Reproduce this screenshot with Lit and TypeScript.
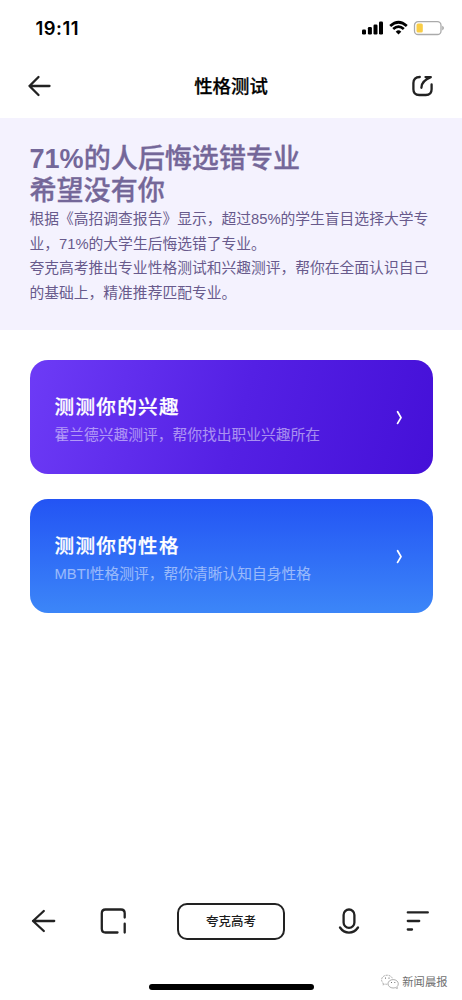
import { LitElement, html, css, svg } from "lit";
import { customElement, property } from "lit/decorators.js";

@customElement("test-card")
class TestCard extends LitElement {
  @property() heading = "";
  @property() note = "";

  static styles = css`
    :host {
      box-sizing: border-box;
      display: flex;
      align-items: center;
      justify-content: space-between;
      height: 114px;
      padding: 2px 28px 0 25px;
      border-radius: 18px;
      color: #fff;
    }
    .text {
      padding-top: 5px;
    }
    .title {
      margin: 0;
      font-size: 19.6px;
      line-height: 28px;
      letter-spacing: 1.3px;
      font-weight: 500;
      -webkit-text-stroke: 0.25px currentColor;
    }
    .note {
      margin: 0;
      font-size: 14.75px;
      line-height: 28px;
      opacity: 0.5;
      white-space: nowrap;
    }
    .chevron {
      display: block;
    }
  `;

  render() {
    return html`
      <div class="text">
        <h2 class="title">${this.heading}</h2>
        <p class="note">${this.note}</p>
      </div>
      <svg class="chevron" width="10" height="16" viewBox="0 0 10 16" fill="none" stroke="#fff" stroke-width="1.8" stroke-linecap="round" stroke-linejoin="round">
        <path d="M2.6 1.8L6 7.6L2.6 13.4" />
      </svg>
    `;
  }
}

const arrow = svg`<path d="M23.2 12H2M12.8 2L2 12L12.8 22" />`;

@customElement("app-root")
class AppRoot extends LitElement {
  static styles = css`
    :host {
      display: flex;
      flex-direction: column;
      box-sizing: border-box;
      width: 462px;
      height: 1000px;
      overflow: hidden;
      background: #fff;
      font-family: "Liberation Sans", "Noto Sans CJK SC", sans-serif;
      color: #1c1c1c;
    }
    svg {
      display: block;
      flex: none;
    }
    .line {
      fill: none;
      stroke: #222;
      stroke-width: 2.3;
      stroke-linecap: round;
      stroke-linejoin: round;
    }
    .status {
      display: flex;
      align-items: center;
      justify-content: space-between;
      height: 56px;
      padding: 0 17px 0 35.5px;
    }
    .clock {
      font-family: Inter, sans-serif;
      font-size: 18.4px;
      font-weight: 600;
      letter-spacing: 0.5px;
      color: #000;
    }
    .nav {
      display: grid;
      grid-template-columns: 24px 1fr 24px;
      align-items: center;
      height: 62px;
      padding: 0 27px 2px;
      box-sizing: border-box;
    }
    .nav-title {
      margin: 0;
      padding-top: 1px;
      text-align: center;
      font-size: 18.4px;
      line-height: 26px;
      font-weight: 500;
      -webkit-text-stroke: 0.25px currentColor;
      color: #000;
    }
    .hero {
      box-sizing: border-box;
      height: 212px;
      padding: 25px 29.5px 0;
      background: #f4f2fe;
    }
    .hero-title {
      margin: 0;
      font-size: 27.05px;
      line-height: 32px;
      font-weight: 500;
      -webkit-text-stroke: 0.3px currentColor;
      color: #746799;
    }
    .figure {
      font-weight: 700;
      -webkit-text-stroke: 0;
    }
    .hero-text {
      margin: 0;
      font-size: 14.77px;
      line-height: 24.6px;
      white-space: nowrap;
      color: #685a8c;
    }
    .cards {
      flex: 1;
      display: flex;
      flex-direction: column;
      gap: 25px;
      padding: 30px 29.5px 0;
    }
    .interest {
      background: linear-gradient(105deg, #6d3bf6 0%, #5420e4 52%, #4510d8 100%);
    }
    .character {
      background: linear-gradient(180deg, #2354f4, #3c86f8);
    }
    .toolbar {
      display: grid;
      grid-template-columns: 69px 77px 160.5px 67.5px auto;
      align-items: center;
      height: 38px;
      padding-left: 31px;
    }
    .search {
      box-sizing: border-box;
      width: 108px;
      height: 37px;
      border: 2px solid #222;
      border-radius: 10px;
      text-align: center;
      font-size: 12.5px;
      line-height: 34px;
      font-weight: 500;
    }
    .footer {
      display: grid;
      grid-template-columns: 1fr 165px 1fr;
      align-items: end;
      height: 60px;
      box-sizing: border-box;
      padding-bottom: 10px;
    }
    .home {
      grid-column: 2;
      height: 6px;
      border-radius: 3px;
      background: #000;
    }
    .source {
      display: flex;
      align-items: center;
      justify-content: flex-end;
      gap: 3px;
      padding-right: 14.5px;
      font-size: 11.3px;
      line-height: 16px;
      color: #707070;
    }
  `;

  render() {
    return html`
      <header class="status">
        <span class="clock">19:11</span>
        <svg width="84" height="16" viewBox="0 0 84 16">
          <rect x="1" y="9.5" width="4" height="5" rx="1.2" />
          <rect x="6.9" y="7" width="4" height="7.5" rx="1.2" />
          <rect x="12.5" y="4.5" width="4" height="10" rx="1.2" />
          <rect x="18" y="1.5" width="4" height="13" rx="1.2" />
          <g fill="none" stroke="#000" stroke-width="2.7">
            <path d="M29.2 6.1Q37.5 -1.6 45.8 6.1" />
            <path d="M32.2 9.1Q37.5 4.2 42.8 9.1" />
          </g>
          <path d="M34.7 11.7Q37.5 9 40.3 11.7L37.5 14.5Z" />
          <rect x="53.5" y="1.7" width="26.5" height="12.8" rx="3.6" fill="none" stroke="#aaa" stroke-width="1.3" />
          <rect x="55.5" y="3.6" width="6.3" height="9" rx="1.5" fill="#f9cd46" />
          <path d="M81.2 5.8Q83 6.5 83 8T81.2 10.4Z" fill="#aaa" />
        </svg>
      </header>
      <nav class="nav">
        <svg class="line" width="24" height="24" viewBox="0 0 24 24"><path d="M22.5 12H2.5M11.5 3L2.5 12L11.5 21" /></svg>
        <h1 class="nav-title">性格测试</h1>
        <svg class="line" width="24" height="24" viewBox="0 0 24 24">
          <path d="M8.8 3Q2.4 3 2.4 9V15.2Q2.4 21 8.2 21H14.8Q20.6 21 20.6 15.2V10.5" />
          <path d="M14.5 3.1H19.8Q10.2 7 10.4 13.8" />
        </svg>
      </nav>
      <section class="hero">
        <h2 class="hero-title"><span class="figure">71%</span>的人后悔选错专业<br />希望没有你</h2>
        <p class="hero-text">
          根据《高招调查报告》显示，超过85%的学生盲目选择大学专<br />业，71%的大学生后悔选错了专业。<br />夸克高考推出专业性格测试和兴趣测评，帮你在全面认识自己<br />的基础上，精准推荐匹配专业。
        </p>
      </section>
      <main class="cards">
        <test-card class="interest" heading="测测你的兴趣" note="霍兰德兴趣测评，帮你找出职业兴趣所在"></test-card>
        <test-card class="character" heading="测测你的性格" note="MBTI性格测评，帮你清晰认知自身性格"></test-card>
      </main>
      <div class="toolbar">
        <svg class="line" width="25" height="24" viewBox="0 0 25 24">${arrow}</svg>
        <svg class="line" width="27" height="26" viewBox="0 0 27 26">
          <path d="M17.5 24.5H5.5Q1.8 24.5 1.8 20.8V5.2Q1.8 1.5 5.5 1.5H21Q24.7 1.5 24.7 5.2V9.5M24.7 15.7V24.5" />
        </svg>
        <div class="search">夸克高考</div>
        <svg class="line" width="22" height="26" viewBox="0 0 22 26">
          <rect x="5.6" y="1.5" width="10.8" height="18.3" rx="5.4" />
          <path d="M2 19.5Q5.5 24.6 11 24.6T20 19.5" />
        </svg>
        <svg class="line" width="24" height="26" viewBox="0 0 24 26"><path d="M2.8 4.4H22.8M2.8 13H14.2M2.8 21.5H7" /></svg>
      </div>
      <footer class="footer">
        <div class="home"></div>
        <div class="source">
          <svg width="18" height="16" viewBox="0 0 18 16" fill="none" stroke="#999" stroke-width="0.8">
            <path d="M6.3 10.2Q5.2 10.4 4 10L1.8 11L2.2 9Q0.6 7.7 0.6 5.8C0.6 3.2 3 1.2 6.1 1.2C9 1.2 11 2.8 11.5 5" stroke-dasharray="2 0.8" />
            <path d="M16 12.7Q17.3 11.5 17.3 9.8C17.3 7.3 15 5.6 12.1 5.6S7 7.5 7 9.8S9.3 14 12.1 14Q13.3 14 14.2 13.6L16.3 14.5Z" />
            <path d="M4 4.2H5M7.5 4.2H8.5M10 8.5H11M13.3 8.5H14.3" stroke="#777" stroke-width="1.2" />
          </svg>
          <span>新闻晨报</span>
        </div>
      </footer>
    `;
  }
}
